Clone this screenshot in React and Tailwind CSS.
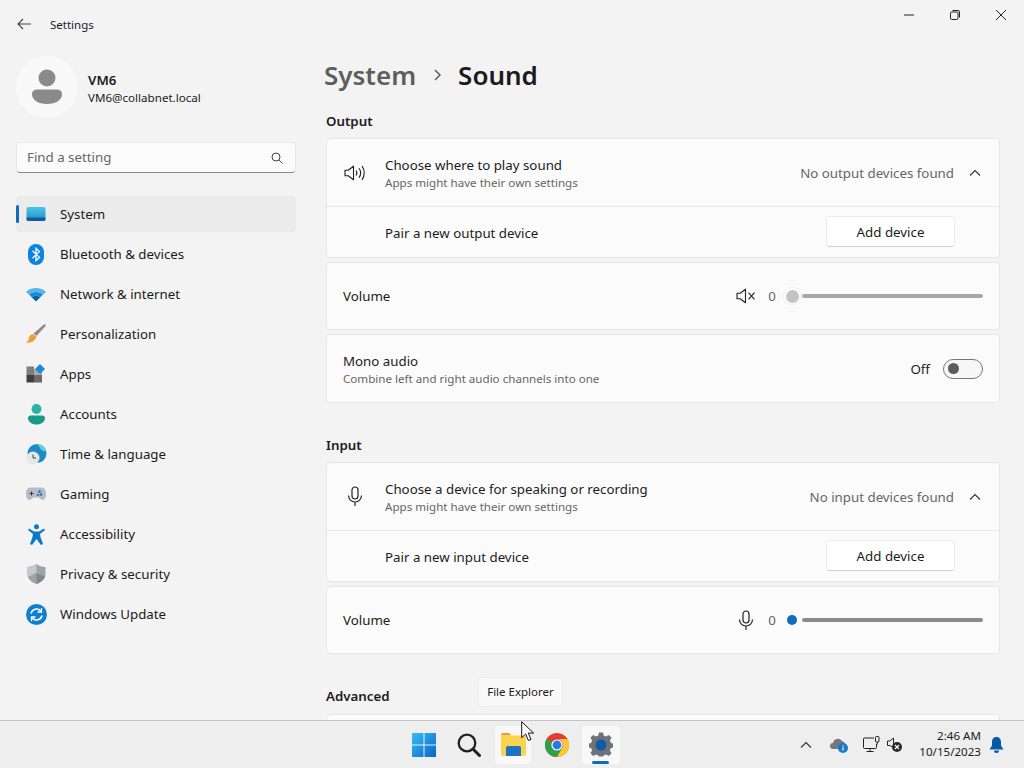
import React from "react";

const Sp = ({ className = "", children, box = "0 0 24 24" }) => (
  <svg viewBox={box} className={className} fill="none">{children}</svg>
);

const navIcons = {
  system: (
    <Sp className="w-[20px] h-[16px]" box="0 0 20 16">
      <defs><linearGradient id="sys" x1="0" y1="0" x2="0" y2="1"><stop offset="0" stopColor="#4fc3e8" /><stop offset="1" stopColor="#1b8fc9" /></linearGradient></defs>
      <rect x="0.5" y="1" width="19" height="14" rx="2" fill="url(#sys)" />
      <path d="M.5 11.5h19V13a2 2 0 0 1-2 2h-15a2 2 0 0 1-2-2z" fill="#0f5c9c" />
    </Sp>
  ),
  bt: (
    <Sp className="w-[16px] h-[21px]" box="0 0 16 21">
      <rect x="0" y="0" width="16" height="21" rx="8" fill="#0a84e0" />
      <path d="M4.5 6.8l7 6.6-3.5 3.2V4.4l3.5 3.2-7 6.6" stroke="#fff" strokeWidth="1.3" />
    </Sp>
  ),
  net: (
    <Sp className="w-[20px] h-[15px]" box="0 0 20 15">
      <path d="M0 5C5-.5 15-.5 20 5l-3 2.6C12.5 4 7.5 4 3 7.6z" fill="#54b6ee" />
      <path d="M3 7.6C7.5 4 12.5 4 17 7.6l-2.7 2.6c-2.6-2-6-2-8.6 0z" fill="#1a8ad8" />
      <path d="M5.7 10.2c2.6-2 6-2 8.6 0L10 14.5z" fill="#0b5ea8" />
    </Sp>
  ),
  brush: (
    <Sp className="w-[22px] h-[22px]" box="0 0 22 22">
      <path d="M19.5 1L21 2.5 11.5 13 8.5 10.5z" fill="#8b8b8b" />
      <path d="M8 11l3.5 2.8C10.5 17.5 6 20.5 1 19.5c2.5-1.5 2.5-3 3-5 .6-2 2.2-3.2 4-3.5z" fill="#f09a3e" />
    </Sp>
  ),
  apps: (
    <Sp className="w-[20px] h-[20px]" box="0 0 20 20">
      <rect x="0.5" y="2.5" width="7.5" height="8" fill="#7e7e7e" />
      <rect x="0.5" y="10.5" width="7.5" height="8" fill="#3f3f3f" />
      <rect x="8" y="10.5" width="8" height="8" fill="#6a6a6a" />
      <rect x="8" y="5" width="8" height="5.5" fill="#a9a9a9" />
      <path d="M14 0l5 5-5 5-5-5z" fill="#1a8ad8" />
    </Sp>
  ),
  acct: (
    <Sp className="w-[17px] h-[21px]" box="0 0 17 21">
      <circle cx="8.5" cy="5" r="5" fill="#2bb5a0" />
      <path d="M0 14c0-1.7 1.3-2.5 3-2.5h11c1.7 0 3 .8 3 2.5 0 4-4 6.5-8.5 6.5S0 18 0 14z" fill="#179a88" />
    </Sp>
  ),
  time: (
    <Sp className="w-[21px] h-[21px]" box="0 0 21 21">
      <circle cx="11" cy="9.5" r="9.5" fill="#1b8cc4" />
      <path d="M11 0a9.5 9.5 0 0 1 9 7c-3 1-5-1-6-3s-2-3-3-4z" fill="#62cfe0" />
      <circle cx="7" cy="14" r="6.5" fill="#e6e6e6" />
      <path d="M7 10.5V14h3" stroke="#444" strokeWidth="1" />
    </Sp>
  ),
  game: (
    <Sp className="w-[20px] h-[14px]" box="0 0 20 14">
      <path d="M4 .5h12c2.5 0 4 2.5 4 6.5 0 3.5-1.5 6-3.5 6-2 0-3-2.5-4-2.5H7.5c-1 0-2 2.5-4 2.5S0 10.500 0 7C0 3 1.500.5 4 .5z" fill="#b5bcc4" />
      <path d="M3.500 6.500h4M5.500 4.500v4" stroke="#333" strokeWidth="1" />
      <circle cx="13.500" cy="4.500" r="1.300" fill="#1a6fc0" />
      <circle cx="15" cy="7.500" r="1.300" fill="#1a6fc0" />
      <circle cx="12" cy="8" r="1.100" fill="#1a6fc0" />
    </Sp>
  ),
  acc: (
    <Sp className="w-[17px] h-[21px]" box="0 0 17 21">
      <circle cx="8.500" cy="2.700" r="2.500" fill="#0a78c8" />
      <path d="M1 4.500l5 3h5l5-3 1 1.500-5 4 .5 3L15 20l-2 1-4.500-6L4 21l-2-1 2.500-7 .5-3-5-4z" fill="#0a78c8" />
    </Sp>
  ),
  shield: (
    <Sp className="w-[19px] h-[20px]" box="0 0 19 20">
      <path d="M9.500 0c2.500 2 5.500 2.800 9 3v7c0 5-4 8.300-9 10-5-1.700-9-5-9-10V3c3.500-.2 6.500-1 9-3z" fill="#9ea3a6" />
      <path d="M9.500 0c-2.500 2-5.500 2.800-9 3v7c0 1 .2 2 .5 2.800L9.500 9z" fill="#c4c8ca" />
      <path d="M9.500 9l8.500 3.800C16.500 16.200 13.500 18.500 9.500 20z" fill="#83888b" />
    </Sp>
  ),
  update: (
    <Sp className="w-[21px] h-[21px]" box="0 0 21 21">
      <circle cx="10.500" cy="10.500" r="10.500" fill="#0f80cf" />
      <path d="M5 9.500a5.600 5.600 0 0 1 9.800-2.500M16 11.500A5.600 5.600 0 0 1 6.200 14" stroke="#fff" strokeWidth="1.500" />
      <path d="M15.500 4v4h-4M5.500 17v-4h4" stroke="#fff" strokeWidth="1.300" />
    </Sp>
  ),
};

const nav = [
  ["System", "system"],
  ["Bluetooth & devices", "bt"],
  ["Network & internet", "net"],
  ["Personalization", "brush"],
  ["Apps", "apps"],
  ["Accounts", "acct"],
  ["Time & language", "time"],
  ["Gaming", "game"],
  ["Accessibility", "acc"],
  ["Privacy & security", "shield"],
  ["Windows Update", "update"],
];

const Chevron = () => (
  <Sp className="w-[12px] h-[8px]" box="0 0 12 8"><path d="M1 6.500L6 1.500l5 5" stroke="#333" strokeWidth="1.100" /></Sp>
);

const Mic = () => (
  <Sp className="w-[16px] h-[21px]" box="0 0 16 21">
    <rect x="5" y="1" width="6" height="12" rx="3" stroke="#222" strokeWidth="1.200" />
    <path d="M1.500 9.500a6.500 6.500 0 0 0 13 0M8 16v4" stroke="#222" strokeWidth="1.200" />
  </Sp>
);

const Speaker = ({ waves }) => (
  <Sp className={waves ? "w-[22px] h-[16px]" : "w-[20px] h-[16px]"} box={waves ? "0 0 22 16" : "0 0 20 16"}>
    <path d="M1 5.200h3.200L9.500 1.200v13.600L4.200 10.800H1z" stroke="#222" strokeWidth="1.100" strokeLinejoin="round" />
    {waves ? (
      <path d="M12 5.500c1.100 1.500 1.100 3.500 0 5M15 3.300c2 2.800 2 6.600 0 9.400M18 1.200c3 4 3 9.600 0 13.600" stroke="#222" strokeWidth="1.100" />
    ) : (
      <path d="M12.500 4.700l6 6.600M18.500 4.700l-6 6.600" stroke="#222" strokeWidth="1.100" />
    )}
  </Sp>
);

const Card = ({ children, className = "" }) => (
  <div className={`bg-[#fbfbfb] border border-[#e6e6e6] rounded-[4px] ${className}`}>{children}</div>
);

const Expander = ({ icon, title, status, pair }) => (
  <Card>
    <div className="h-[68px] flex items-center border-b border-[#e9e9e9]">
      <div className="w-[56px] mr-[2px] flex justify-center shrink-0">{icon}</div>
      <div className="flex-1 pt-[2px]">
        <div className="text-[13.3px] leading-[18px] text-[#1b1b1b]">{title}</div>
        <div className="text-[11.6px] leading-[16px] mt-[1px] text-[#666]">{status[0]}</div>
      </div>
      <div className="text-[13.3px] text-[#666] mr-[15px] pt-[3px]">{status[1]}</div>
      <div className="w-[12px] mr-[18px] flex"><Chevron /></div>
    </div>
    <div className="h-[50px] flex items-center pl-[58px] pr-[44px]">
      <div className="flex-1 text-[13.3px] text-[#1b1b1b] pt-[4px]">{pair}</div>
      <button className="w-[129px] h-[31px] -mt-[1px] pt-[2px] bg-white border border-[#ececec] border-b-[#cfcfcf] rounded-[4px] text-[13.3px] text-[#1b1b1b]">Add device</button>
    </div>
  </Card>
);

const Volume = ({ icon, knob, active }) => (
  <Card className="h-[68px] flex items-center pl-[16px] pr-[16px]">
    <div className="flex-1 text-[13.3px] text-[#1b1b1b] pt-[2px]">Volume</div>
    <div className="w-[24px] flex justify-center mr-[10px]">{icon}</div>
    <div className="text-[13.3px] text-[#666] w-[8px] mr-[7px] text-center pt-[2px]">0</div>
    {knob}
    <div className={`w-[181px] h-[4px] ml-[1px] rounded-full ${active ? "bg-[#8b8b8b]" : "bg-[#a8a8a8]"}`} />
  </Card>
);

const Label = ({ children, className = "" }) => (
  <div className={`text-[13.3px] font-semibold text-[#1b1b1b] leading-[18px] ${className}`}>{children}</div>
);

export default function App() {
  return (
    <div className="w-[1024px] h-[768px] overflow-hidden relative flex flex-col bg-[#f3f3f3] font-['Noto_Sans','Open_Sans',sans-serif] text-[#1b1b1b]">
      <div className="h-[720px] flex flex-col overflow-hidden">
        {/* title bar */}
        <div className="h-[48px] shrink-0 flex">
          <div className="w-[50px] h-[48px] pl-[17px] flex items-center">
            <Sp className="w-[14px] h-[12px]" box="0 0 14 12"><path d="M14 6H1M6 1L1 6l5 5" stroke="#444" strokeWidth="1.100" /></Sp>
          </div>
          <div className="h-[48px] pt-[2px] flex items-center text-[11.5px] text-[#1b1b1b]">Settings</div>
          <div className="flex-1" />
          <div className="h-[30px] flex">
            <div className="w-[46px] flex items-center justify-center"><Sp className="w-[10px] h-[10px]" box="0 0 10 10"><path d="M0 5h10" stroke="#222" strokeWidth="1" /></Sp></div>
            <div className="w-[46px] flex items-center justify-center"><Sp className="w-[10px] h-[10px]" box="0 0 10 10"><rect x=".5" y="2" width="7.500" height="7.500" rx="1.200" stroke="#222" strokeWidth="1" /><path d="M2.500.5h5.500a1.500 1.500 0 0 1 1.500 1.500v5.500" stroke="#222" strokeWidth="1" /></Sp></div>
            <div className="w-[46px] flex items-center justify-center"><Sp className="w-[10px] h-[10px]" box="0 0 10 10"><path d="M0 0l10 10M10 0L0 10" stroke="#222" strokeWidth="1" /></Sp></div>
          </div>
        </div>

        <div className="flex-1 flex min-h-0">
          {/* sidebar */}
          <div className="w-[326px] shrink-0 pl-[16px] pr-[30px]">
            <div className="flex items-center h-[62px] mt-[8px]">
              <div className="w-[62px] h-[62px] rounded-full bg-[#f9f9f9] flex flex-col items-center justify-center">
                <Sp className="w-[30px] h-[36px]" box="0 0 30 36">
                  <circle cx="15" cy="9" r="8.500" fill="#8a8a8a" />
                  <path d="M0 25c0-3 2-4.500 5-4.500h20c3 0 5 1.500 5 4.500 0 6-6 10-15 10S0 31 0 25z" fill="#8a8a8a" />
                </Sp>
              </div>
              <div className="ml-[10px] pt-[4px]">
                <div className="text-[13.3px] font-semibold leading-[18px] text-[#1b1b1b]">VM6</div>
                <div className="text-[11.6px] leading-[18px] text-[#1b1b1b]">VM6@collabnet.local</div>
              </div>
            </div>
            <div className="mt-[24px] h-[31px] bg-[#fbfbfb] border border-[#e8e8e8] border-b-[#8a8a8a] rounded-[4px] flex items-center pl-[10px] pr-[12px]">
              <div className="flex-1 text-[13.3px] text-[#666]">Find a setting</div>
              <Sp className="w-[12px] h-[12px]" box="0 0 12 12"><circle cx="5" cy="5" r="4" stroke="#444" strokeWidth="1" /><path d="M8 8l3.500 3.500" stroke="#444" strokeWidth="1" /></Sp>
            </div>
            <div className="mt-[23px] flex flex-col gap-[4px]">
              {nav.map(([label, k], i) => (
                <div key={k} className={`relative h-[36px] flex items-center rounded-[4px] ${i === 0 ? "bg-[#ebebeb]" : ""}`}>
                  {i === 0 && <div className="absolute left-0 top-[9px] w-[3px] h-[18px] bg-[#0f6cbd] rounded-full" />}
                  <div className="w-[40px] flex justify-center shrink-0">{navIcons[k]}</div>
                  <div className="pl-[4px] pt-[2px] text-[13.3px] text-[#1b1b1b]">{label}</div>
                </div>
              ))}
            </div>
          </div>

          {/* content */}
          <div className="flex-1 min-w-0 pr-[24px]">
            <div className="h-[54px] flex items-center -ml-[2px] text-[26px] font-semibold leading-[36px]">
              <span className="text-[#5e5e5e]">System</span>
              <Sp className="w-[10px] h-[12px] ml-[17px] mr-[15px]" box="0 0 10 12"><path d="M2 1l5 5-5 5" stroke="#5e5e5e" strokeWidth="1.500" /></Sp>
              <span className="text-[#1b1b1b]">Sound</span>
            </div>
            <Label className="mt-[10px] mb-[8px]">Output</Label>
            <div className="flex flex-col gap-[4px]">
              <Expander
                icon={<Speaker waves />}
                title="Choose where to play sound"
                status={["Apps might have their own settings", "No output devices found"]}
                pair="Pair a new output device"
              />
              <Volume
                icon={<Speaker />}
                knob={<div className="w-[18px] h-[18px] rounded-full bg-white border border-[#eee] flex items-center justify-center shrink-0"><div className="w-[13px] h-[13px] rounded-full bg-[#c4c4c4]" /></div>}
              />
              <Card className="h-[69px] flex items-center pl-[16px] pr-[16px]">
                <div className="flex-1 pt-[2px]">
                  <div className="text-[13.3px] leading-[18px] text-[#1b1b1b]">Mono audio</div>
                  <div className="text-[11.6px] leading-[16px] mt-[1px] text-[#666]">Combine left and right audio channels into one</div>
                </div>
                <div className="text-[13.3px] text-[#1b1b1b] mr-[13px] pt-[2px]">Off</div>
                <div className="w-[40px] h-[20px] rounded-full border border-[#777] bg-[#f7f7f7] flex items-center pl-[4px]">
                  <div className="w-[11px] h-[11px] rounded-full bg-[#5c5c5c]" />
                </div>
              </Card>
            </div>
            <Label className="mt-[33px] mb-[8px]">Input</Label>
            <div className="flex flex-col gap-[4px]">
              <Expander
                icon={<Mic />}
                title="Choose a device for speaking or recording"
                status={["Apps might have their own settings", "No input devices found"]}
                pair="Pair a new input device"
              />
              <Volume
                active
                icon={<Mic />}
                knob={<div className="w-[18px] h-[18px] flex items-center justify-center shrink-0"><div className="w-[10px] h-[10px] rounded-full bg-[#0f6cbd]" /></div>}
              />
            </div>
            <Label className="mt-[33px] mb-[9px]">Advanced</Label>
            <Card className="h-[40px]" />
          </div>
        </div>
      </div>

      {/* taskbar */}
      <div className="h-[48px] shrink-0 bg-[#eeeeee] border-t border-[#c4c4c4] flex items-center pl-[402px] pr-[20px]">
        <div className="w-[44px] h-[38px] flex items-center justify-center">
          <Sp className="w-[24px] h-[24px]" box="0 0 24 24">
            <defs><linearGradient id="win" x1="0" y1="0" x2="1" y2="1"><stop offset="0" stopColor="#35c1f1" /><stop offset="1" stopColor="#0a63c9" /></linearGradient></defs>
            <path d="M0 0h11.500v11.500H0zM12.500 0H24v11.500H12.500zM0 12.500h11.500V24H0zM12.500 12.500H24V24H12.500z" fill="url(#win)" />
          </Sp>
        </div>
        <div className="w-[45px] h-[38px] flex items-center justify-center">
          <Sp className="w-[24px] h-[24px]" box="0 0 24 24"><circle cx="10" cy="10" r="8.300" stroke="#222" strokeWidth="2.300" /><path d="M16 16l6.500 6.500" stroke="#222" strokeWidth="3" strokeLinecap="round" /></Sp>
        </div>
        <div className="w-[36px] h-[38px] mx-[4px] bg-[#f8f8f8] rounded-[4px] flex items-center justify-center">
          <Sp className="w-[25px] h-[23px]" box="0 0 25 23">
            <path d="M0 2a2 2 0 0 1 2-2h6l2.500 2.500H0z" fill="#e0a526" />
            <path d="M0 2.500h23a2 2 0 0 1 2 2V21a2 2 0 0 1-2 2H2a2 2 0 0 1-2-2z" fill="#fbd34e" />
            <path d="M5 15a2 2 0 0 1 2-2h11a2 2 0 0 1 2 2v8H5z" fill="#1d72c4" />
          </Sp>
        </div>
        <div className="w-[44px] h-[38px] flex items-center justify-center">
          <Sp className="w-[24px] h-[24px]" box="0 0 24 24">
            <circle cx="12" cy="12" r="12" fill="#e33b2e" />
            <path d="M12 12L1.600 6A12 12 0 0 0 12 24l5.200-9z" fill="#2fa04a" />
            <path d="M12 6h10.400A12 12 0 0 1 12 24l5.200-9A6 6 0 0 0 12 6z" fill="#fcc934" />
            <circle cx="12" cy="12" r="5.600" fill="#fff" />
            <circle cx="12" cy="12" r="4.400" fill="#2b78e4" />
          </Sp>
        </div>
        <div className="relative w-[38px] h-[38px] ml-[3px] bg-[#f8f8f8] rounded-[4px] flex items-center justify-center">
          <Sp className="w-[24px] h-[25px]" box="0 0 24 24">
            <path d="M10 0h4l.7 3 2.400 1 2.700-1.600 2.800 2.800L20.900 8l1 2.400 2.100.6v4l-2.100.6-1 2.400 1.700 2.800-2.800 2.800-2.700-1.600-2.400 1-.7 1h-4l-.7-1-2.400-1-2.700 1.600-2.800-2.800L3.100 18l-1-2.400L0 15v-4l2.100-.6 1-2.400L1.400 5.200l2.800-2.800L6.900 4l2.400-1z" fill="#6d7378" />
            <circle cx="12" cy="12.500" r="5.500" fill="#0f5ba7" />
          </Sp>
          <div className="absolute bottom-0 left-[10px] w-[17px] h-[3px] rounded-full bg-[#0f6cbd]" />
        </div>

        <div className="flex-1" />
        <div className="flex items-center">
          <div className="w-[12px] flex"><Chevron /></div>
          <div className="ml-[18px]">
            <Sp className="w-[18px] h-[16px]" box="0 0 18 16">
              <path d="M3 12a3 3 0 0 1 0-6 5 5 0 0 1 9-2 4 4 0 0 1 3 3v5z" fill="#75797d" />
              <circle cx="13" cy="11" r="5" fill="#1b78c8" />
              <path d="M13 8.300v.9M13 10.300v3.200" stroke="#fff" strokeWidth="1.200" />
            </Sp>
          </div>
          <div className="ml-[15px]">
            <Sp className="w-[17px] h-[17px]" box="0 0 17 17">
              <path d="M11 2H1.500a1 1 0 0 0-1 1v8.500a1 1 0 0 0 1 1h11a1 1 0 0 0 1-1V8M7 12.500V15.500M3.500 15.500h7" stroke="#222" strokeWidth="1" />
              <rect x="12.500" y=".5" width="3.500" height="5.500" rx="1" stroke="#222" strokeWidth="1" />
              <path d="M14.200 6v2.500" stroke="#222" strokeWidth="1" />
            </Sp>
          </div>
          <div className="ml-[7px]">
            <Sp className="w-[15px] h-[15px]" box="0 0 15 15">
              <path d="M.5 4h2.500L6.500 1v8" stroke="#222" strokeWidth="1" />
              <path d="M.5 4v4.500h2.500l2 1.500" stroke="#222" strokeWidth="1" />
              <circle cx="10" cy="10" r="5" fill="#2a2a2a" />
              <path d="M8 8l4 4M12 8l-4 4" stroke="#fff" strokeWidth="1.100" />
            </Sp>
          </div>
          <div className="ml-[9px] -mt-[2px] w-[70px] text-right text-[11.6px] leading-[16px] text-[#1b1b1b]">
            <div>2:46 AM</div>
            <div>10/15/2023</div>
          </div>
          <div className="ml-[8px]">
            <Sp className="w-[15px] h-[16px]" box="0 0 15 16">
              <path d="M7.500 0C4.500 0 3 2.300 3 5v3.500L.5 12.500h14L12 8.500V5c0-2.700-1.500-5-4.500-5z" fill="#0a58a8" />
              <path d="M5 13.500h5a2.500 2.500 0 0 1-5 0z" fill="#0a58a8" />
            </Sp>
          </div>
        </div>
      </div>

      {/* tooltip and cursor */}
      <div className="absolute left-[478px] top-[677px] w-[85px] h-[30px] bg-[#f9f9f9] border border-[#ebebeb] rounded-[4px] flex items-center justify-center text-[11.5px] text-[#1b1b1b]">File Explorer</div>
      <Sp className="absolute left-[521px] top-[721px] w-[13px] h-[21px]" box="0 0 13 21">
        <path d="M.7.7v16l4-3.700 2.700 6.500 2.600-1.100-2.700-6.300h5.300z" fill="#fff" stroke="#111" strokeWidth="1" />
      </Sp>
    </div>
  );
}
